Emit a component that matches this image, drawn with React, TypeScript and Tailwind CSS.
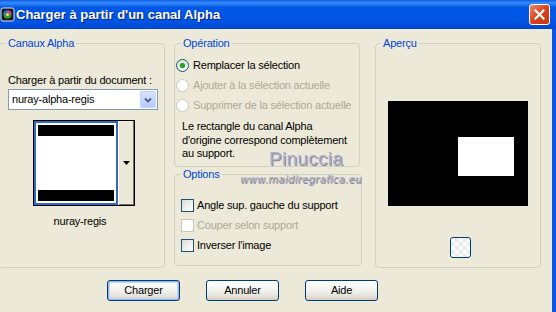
import React from 'react';

const font = { fontFamily: '"Liberation Sans", Arial, sans-serif' };

// small radio in XP style
const Radio = ({ checked, disabled, label }: { checked?: boolean; disabled?: boolean; label: string }) => (
  <div className="flex items-center h-[20px]">
    <div
      className={`w-[13px] h-[13px] rounded-full border flex items-center justify-center ${
        disabled ? 'border-[#cac8bb] bg-white' : 'border-[#1c5180] bg-[linear-gradient(135deg,#dcdcd7,#ffffff)]'
      }`}
    >
      {checked && <div className="w-[5px] h-[5px] rounded-full bg-[#21a121] shadow-[0_0_1px_#4cc94c]" />}
    </div>
    <span className={`ml-[4px] ${disabled ? 'text-[#aca899]' : 'text-black'}`}>{label}</span>
  </div>
);

const Check = ({ disabled, label }: { disabled?: boolean; label: string }) => (
  <div className="flex items-center h-[20px]">
    <div
      className={`w-[13px] h-[13px] border ${
        disabled ? 'border-[#cac8bb] bg-white' : 'border-[#1c5180] bg-[linear-gradient(135deg,#dcdcd7,#ffffff)]'
      }`}
    />
    <span className={`ml-[3px] ${disabled ? 'text-[#aca899]' : 'text-black'}`}>{label}</span>
  </div>
);

const Btn = ({ label, def }: { label: string; def?: boolean }) => (
  <button
    className={`w-[73px] h-[21px] rounded-[3px] border border-[#003c74] bg-[linear-gradient(to_bottom,#ffffff,#f0f0ea_60%,#d6d0c5)] text-black text-[11px] ${
      def ? 'shadow-[inset_0_0_0_1px_#98b8ea,inset_0_0_0_2px_#c0d4f5]' : ''
    }`}
  >
    {label}
  </button>
);

const Legend = ({ children, ml }: { children: React.ReactNode; ml: string }) => (
  <legend className={`${ml} px-[2px] text-[#0046d5] leading-[13px]`}>{children}</legend>
);

export default function App() {
  return (
    <div
      className="w-[556px] h-[312px] bg-[#ece9d8] flex flex-col overflow-hidden relative text-[11px] tracking-[-0.2px]"
      style={font}
    >
      {/* Title bar */}
      <div className="h-[29px] shrink-0 flex items-center bg-[linear-gradient(to_bottom,#0a5ee8_0%,#3b8cf6_10%,#0058e6_25%,#0054e3_75%,#0046d0_100%)]">
        <svg width="15" height="15" viewBox="0 0 15 15" className="ml-[0px]">
          <rect x="1" y="1" width="13" height="13" rx="2" fill="#1a1a1a" stroke="#d8e4f8" />
          <circle cx="7.5" cy="7.5" r="4" fill="#2e9c3a" />
          <path d="M7.5 3.5 A4 4 0 0 1 11.5 7.5 L7.5 7.5Z" fill="#d23a9c" />
          <path d="M3.5 7.5 A4 4 0 0 1 7.5 3.5 L7.5 7.5Z" fill="#3a6cd2" />
          <circle cx="7.5" cy="7.5" r="1.5" fill="#f0e040" />
        </svg>
        <span className="ml-[1px] text-white font-bold text-[13px] tracking-normal [text-shadow:1px_1px_0_#0a1f7a]">
          Charger à partir d'un canal Alpha
        </span>
        <div className="ml-auto mr-[6px] w-[21px] h-[21px] rounded-[3px] border border-white bg-[linear-gradient(135deg,#e98a6c,#d9421c_50%,#c8330e)] flex items-center justify-center">
          <svg width="11" height="11" viewBox="0 0 11 11">
            <path d="M1.5 1.5 L9.5 9.5 M9.5 1.5 L1.5 9.5" stroke="#fff" strokeWidth="2.2" strokeLinecap="square" />
          </svg>
        </div>
      </div>

      {/* Body */}
      <div className="flex-1 flex flex-col border-r-4 border-[#0b55e3]">
        <div className="flex mt-[8px]">
          {/* Canaux Alpha */}
          <fieldset className="ml-[-3px] w-[168px] h-[231px] border border-[#d0d0bf] rounded-[4px] flex flex-col">
            <Legend ml="ml-[8px]">Canaux Alpha</Legend>
            <div className="pl-[10px] mt-[24px] leading-[13px]">Charger à partir du document :</div>
            <div className="ml-[10px] mt-[2px] w-[150px] h-[21px] border border-[#7f9db9] bg-white flex items-center">
              <span className="pl-[3px] flex-1">nuray-alpha-regis</span>
              <div className="w-[16px] h-[17px] mr-[1px] rounded-[2px] bg-[linear-gradient(to_bottom,#d7e2fb,#b8cbf6)] border border-[#c3d3fd] flex items-center justify-center">
                <svg width="8" height="6" viewBox="0 0 8 6">
                  <path d="M1 1.5 L4 4.5 L7 1.5" stroke="#4d6185" strokeWidth="1.8" fill="none" />
                </svg>
              </div>
            </div>
            <div className="ml-[35px] mt-[10px] w-[102px] h-[86px] border border-black flex bg-[#ece9d8]">
              <div className="w-[84px] h-full border-[2px] border-[#316ac5] bg-white flex flex-col p-[2px]">
                <div className="h-[11px] bg-black" />
                <div className="flex-1 bg-white" />
                <div className="h-[11px] bg-black" />
              </div>
              <div className="flex-1 flex items-center justify-center border-l border-[#ffffff] shadow-[inset_-1px_-1px_0_#716f64]">
                <svg width="7" height="4" viewBox="0 0 7 4">
                  <path d="M0 0 H7 L3.5 4Z" fill="#000" />
                </svg>
              </div>
            </div>
            <div className="mt-[9px] text-center leading-[13px] pr-[2px]">nuray-regis</div>
          </fieldset>

          {/* Middle column */}
          <div className="ml-[9px] flex flex-col">
            <fieldset className="w-[186px] h-[130px] border border-[#d0d0bf] rounded-[4px] flex flex-col">
              <Legend ml="ml-[6px]">Opération</Legend>
              <div className="mt-[5px] pl-[1px]">
                <Radio checked label="Remplacer la sélection" />
                <Radio disabled label="Ajouter à la sélection actuelle" />
                <Radio disabled label="Supprimer de la sélection actuelle" />
              </div>
              <div className="mt-[5px] pl-[7px] leading-[13.5px]">
                Le rectangle du canal Alpha
                <br />
                d'origine correspond complètement
                <br />
                au support.
              </div>
            </fieldset>
            <fieldset className="mt-[1px] w-[188px] h-[98px] border border-[#d0d0bf] rounded-[4px] flex flex-col">
              <Legend ml="ml-[6px]">Options</Legend>
              <div className="mt-[14px] pl-[6px]">
                <Check label="Angle sup. gauche du support" />
                <Check disabled label="Couper selon support" />
                <Check label="Inverser l'image" />
              </div>
            </fieldset>
          </div>

          {/* Aperçu */}
          <fieldset className="ml-[13px] w-[166px] h-[231px] border border-[#d0d0bf] rounded-[4px] flex flex-col">
            <Legend ml="ml-[5px]">Aperçu</Legend>
            <div className="ml-[12px] mt-[51px] w-[140px] h-[105px] bg-black pt-[36px] pl-[70px]">
              <div className="w-[56px] h-[39px] bg-white" />
            </div>
            <div className="ml-[74px] mt-[31px] w-[21px] h-[21px] rounded-[3px] border border-[#003c74] bg-[repeating-conic-gradient(#ececec_0_25%,#ffffff_0_50%)] bg-[length:8px_8px]" />
          </fieldset>
        </div>

        {/* Buttons */}
        <div className="flex gap-[26px] pl-[107px] mt-[12px]">
          <Btn label="Charger" def />
          <Btn label="Annuler" />
          <Btn label="Aide" />
        </div>
      </div>

      {/* Watermark */}
      <div className="absolute left-[269px] top-[148px] text-[19px] leading-[22px] tracking-[0.3px] text-[#adadc6] [text-shadow:1px_1px_0_#8a8aa2]">
        Pinuccia
      </div>
      <div className="absolute left-[240px] top-[172px] text-[10px] italic tracking-[0.3px] text-[#a8a8ba] [text-shadow:1px_1px_0_#84849a]" style={{ fontFamily: '"DejaVu Sans", sans-serif' }}>
        www.maidiregrafica.eu
      </div>
    </div>
  );
}
